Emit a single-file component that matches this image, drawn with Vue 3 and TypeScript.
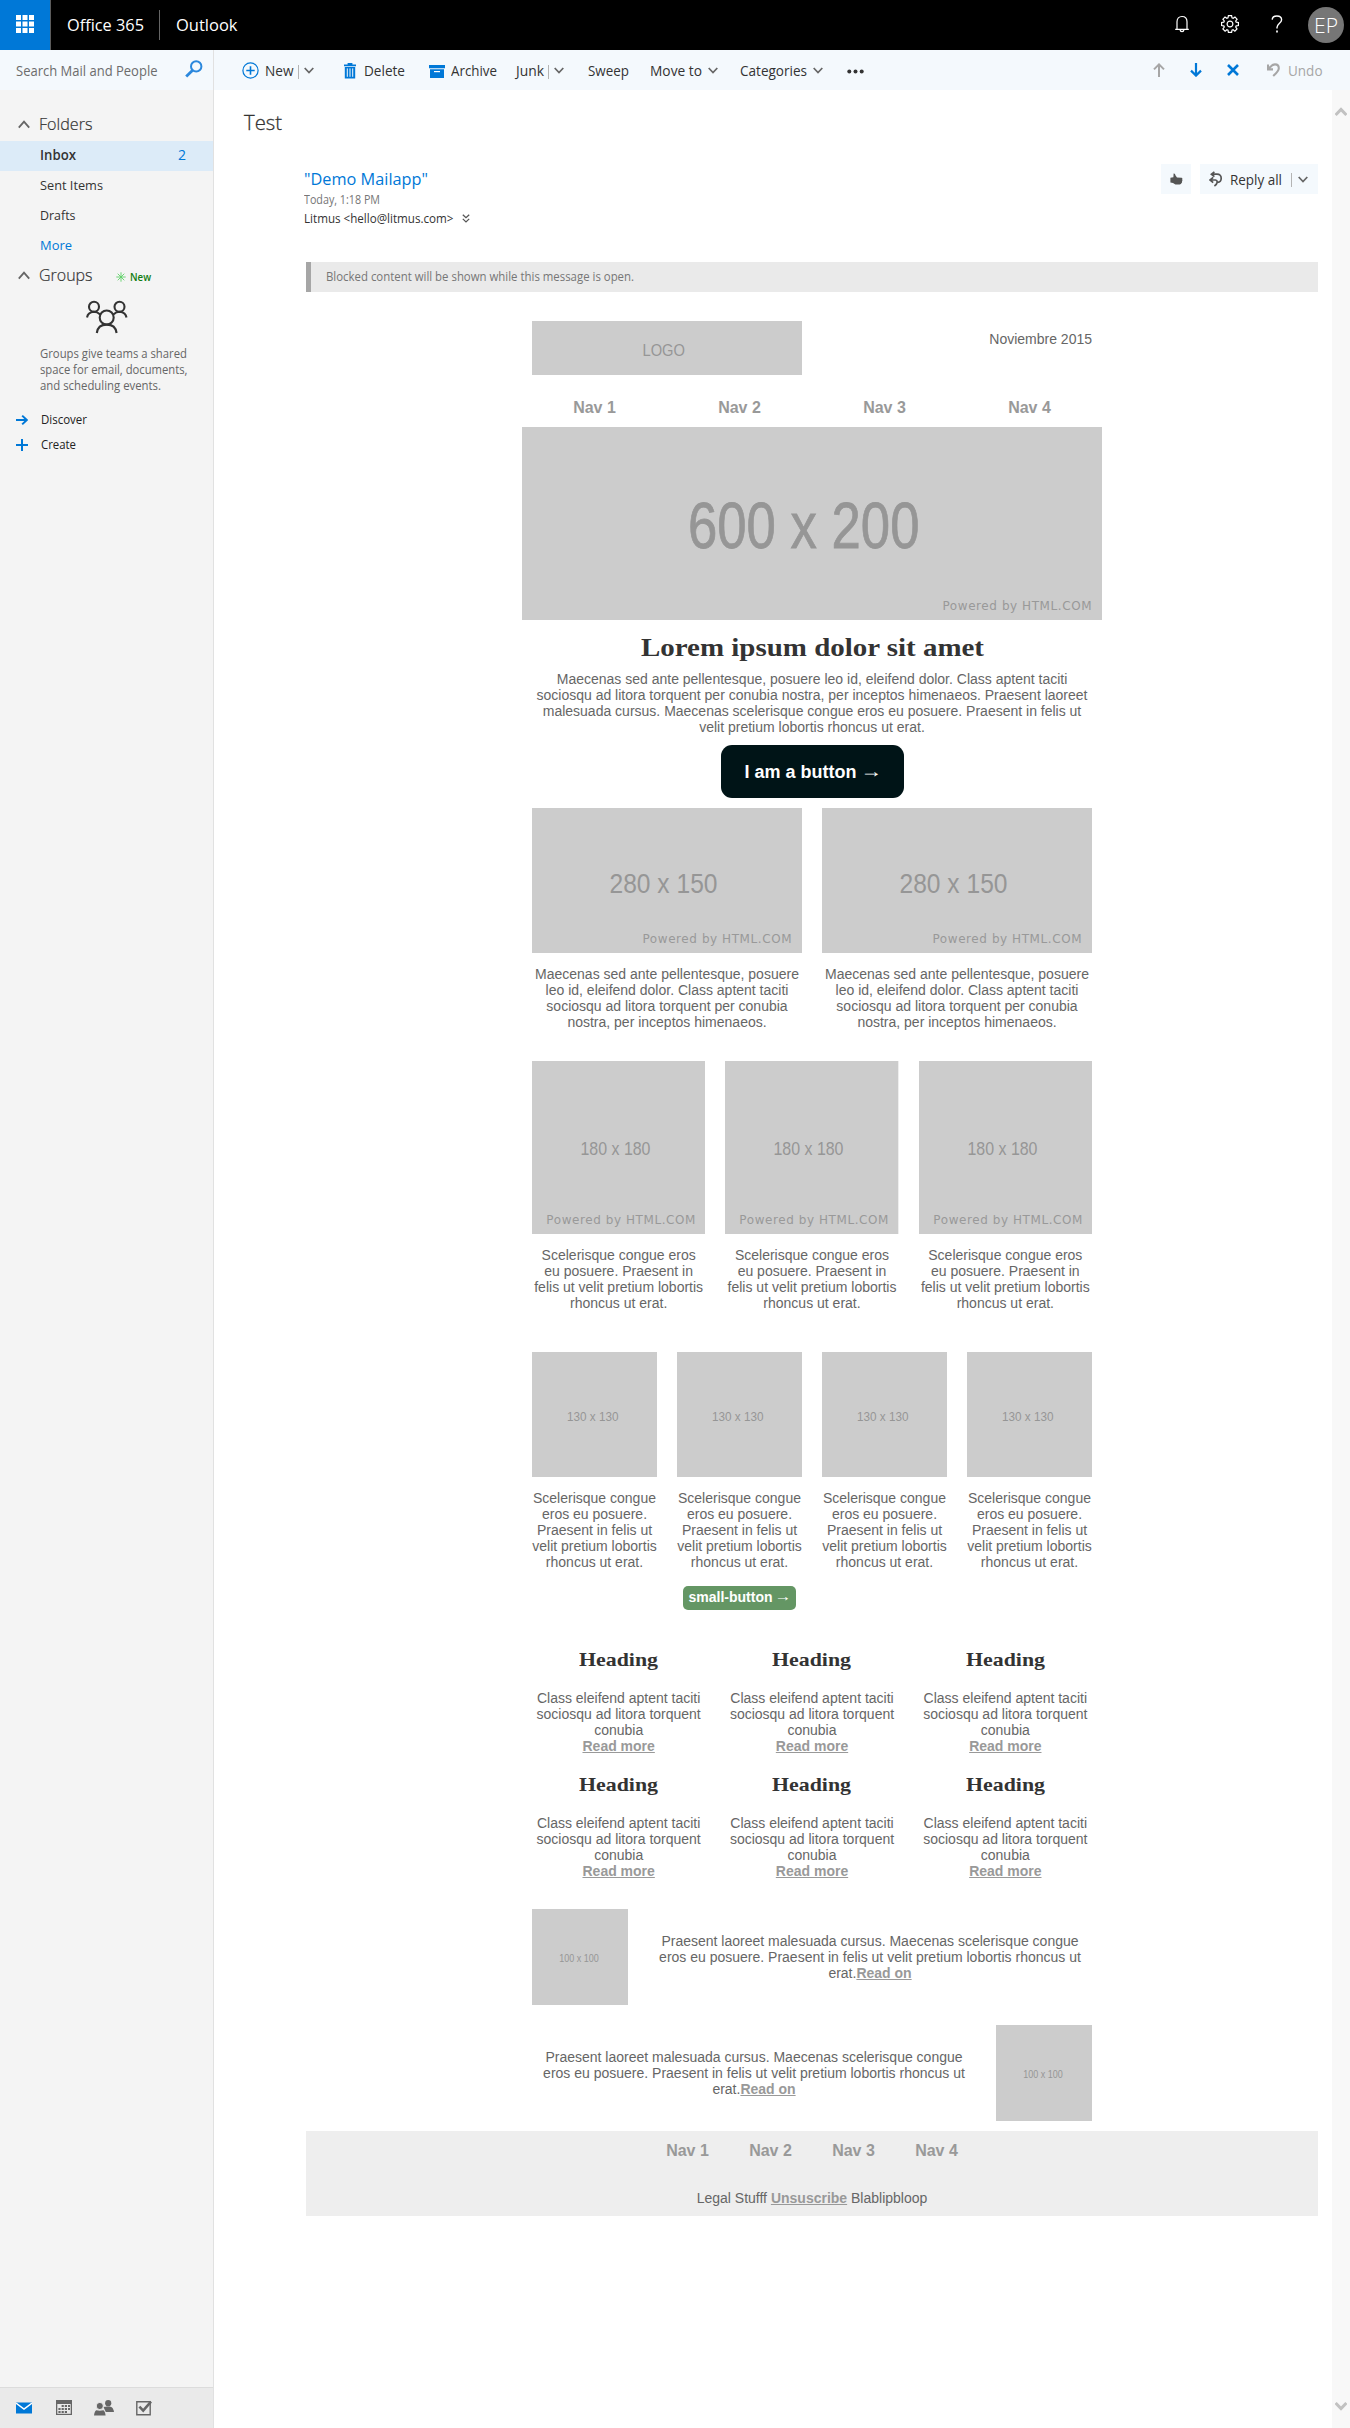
<script setup lang="ts">
import { h } from 'vue'
import type { Directive, FunctionalComponent } from 'vue'

// Squeezes or stretches a single-line label to a given width in pixels.
const vFit: Directive<HTMLElement, number> = {
  mounted(el, { value }) {
    const natural = el.getBoundingClientRect().width
    if (!natural) return
    el.style.transform = `scaleX(${value / natural})`
    el.style.marginRight = `${value - natural}px`
  },
}

interface PlaceholderProps {
  w: number
  h: number
  label: string
  x: number
  y: number
  len: number
  size: number
  credit?: number
}

// Grey dummy picture with its dimensions written on it.
const Placeholder: FunctionalComponent<PlaceholderProps> = (p) =>
  h('svg', { width: p.w, height: p.h, viewBox: `0 0 ${p.w} ${p.h}`, style: 'display:block' }, [
    h('rect', { width: p.w, height: p.h, fill: '#cccccc' }),
    h(
      'text',
      {
        x: p.x,
        y: p.y,
        textLength: p.len,
        lengthAdjust: 'spacingAndGlyphs',
        'font-size': p.size,
        'font-family': '"Liberation Sans", Arial, sans-serif',
        fill: '#969696',
        stroke: '#969696',
        'stroke-width': p.size > 40 ? 0.8 : 0,
      },
      p.label,
    ),
    p.credit
      ? h(
          'text',
          {
            x: p.w - 159.5 + (p.w < 200 ? 0.5 : 0),
            y: p.credit,
            textLength: 149,
            lengthAdjust: 'spacing',
            'font-size': 12,
            'font-family': '"DejaVu Sans", sans-serif',
            fill: '#999999',
          },
          'Powered by HTML.COM',
        )
      : null,
  ])
Placeholder.props = ['w', 'h', 'label', 'x', 'y', 'len', 'size', 'credit']

const folders = [
  { name: 'Inbox', width: 36, count: 2, active: true },
  { name: 'Sent Items', width: 63 },
  { name: 'Drafts', width: 35.5 },
  { name: 'More', width: 32, link: true },
]

const nav = ['Nav 1', 'Nav 2', 'Nav 3', 'Nav 4']

const intro = [
  'Maecenas sed ante pellentesque, posuere leo id, eleifend dolor. Class aptent taciti',
  'sociosqu ad litora torquent per conubia nostra, per inceptos himenaeos. Praesent laoreet',
  'malesuada cursus. Maecenas scelerisque congue eros eu posuere. Praesent in felis ut',
  'velit pretium lobortis rhoncus ut erat.',
]
const half = [
  'Maecenas sed ante pellentesque, posuere',
  'leo id, eleifend dolor. Class aptent taciti',
  'sociosqu ad litora torquent per conubia',
  'nostra, per inceptos himenaeos.',
]
const third = ['Scelerisque congue eros', 'eu posuere. Praesent in', 'felis ut velit pretium lobortis', 'rhoncus ut erat.']
const quarter = ['Scelerisque congue', 'eros eu posuere.', 'Praesent in felis ut', 'velit pretium lobortis', 'rhoncus ut erat.']
const teaser = ['Class eleifend aptent taciti', 'sociosqu ad litora torquent', 'conubia']
const article = ['Praesent laoreet malesuada cursus. Maecenas scelerisque congue', 'eros eu posuere. Praesent in felis ut velit pretium lobortis rhoncus ut']
</script>

<template>
  <div class="app">
    <header class="top">
      <div class="waffle">
        <svg width="18" height="18" viewBox="0 0 18 18" fill="#fff">
          <template v-for="r in 3" :key="r">
            <rect v-for="c in 3" :key="c" :x="(c - 1) * 6.5" :y="(r - 1) * 6.5" width="5" height="5" />
          </template>
        </svg>
      </div>
      <span v-fit="77" class="brand">Office 365</span>
      <i class="brand-sep"></i>
      <span v-fit="61.5" class="brand">Outlook</span>
      <div class="top-right">
        <svg class="bell" width="16" height="18" viewBox="0 0 16 18" fill="none" stroke="#fff" stroke-width="1.2">
          <path d="M1.2 14.4H14.8M3 14V6.8C3 3.6 5 1.5 8 1.5S13 3.6 13 6.8V14M6 14.6C6.2 16 7 16.6 8 16.6S9.8 16 10 14.6" />
        </svg>
        <svg class="gear" width="20" height="20" viewBox="-10 -10 20 20" fill="none" stroke="#fff" stroke-width="1.2">
          <path d="M-1.6-8.4H1.6L2-6.2 3.2-5.7 5-7 7.1-4.8 5.7-3 6.2-1.9 8.4-1.5V1.5L6.2 1.9 5.7 3 7 5 4.9 7.1 3.1 5.7 2 6.2 1.6 8.4H-1.6L-2 6.2-3.1 5.7-4.9 7.1-7.1 5-5.7 3-6.2 1.9-8.4 1.5V-1.5L-6.2-1.9-5.7-3-7.1-4.8-5-7-3.2-5.7-2-6.2Z" />
          <circle r="2.9" />
        </svg>
        <svg class="help" width="12" height="18" viewBox="0 0 12 18" fill="none" stroke="#fff" stroke-width="1.4">
          <path d="M1.2 4.6C1.3 2.2 3 1 5.9 1S10.6 2.4 10.6 4.8C10.6 8.2 6 8.4 6 12.6V13.4" />
          <path d="M6 15.6V17.4" stroke-width="1.7" />
        </svg>
        <div class="avatar"><span v-fit="24">EP</span></div>
      </div>
    </header>

    <div class="body">
      <aside class="side">
        <div class="search">
          <span v-fit="141.5">Search Mail and People</span>
          <svg width="18" height="18" viewBox="0 0 18 18" fill="none" stroke="#2b88dd">
            <circle cx="11.2" cy="6.4" r="5.2" stroke-width="2" />
            <path d="M7.4 10.4L1.2 16.6" stroke-width="2.8" />
          </svg>
        </div>
        <div class="group-head folders-head">
          <svg width="12" height="9" viewBox="0 0 12 9" fill="none" stroke="#666" stroke-width="1.8"><path d="M.8 7.6L6 1.6 11.2 7.6" /></svg>
          <span v-fit="53.5">Folders</span>
        </div>
        <div v-for="f in folders" :key="f.name" class="folder" :class="{ active: f.active, link: f.link }">
          <span v-fit="f.width">{{ f.name }}</span>
          <b v-if="f.count">{{ f.count }}</b>
        </div>
        <div class="group-head groups-head">
          <svg width="12" height="9" viewBox="0 0 12 9" fill="none" stroke="#666" stroke-width="1.8"><path d="M.8 7.6L6 1.6 11.2 7.6" /></svg>
          <span v-fit="53.5">Groups</span>
          <svg class="star" width="10" height="10" viewBox="-5 -5 10 10" stroke="#5fd068" stroke-width="0.9"><path d="M0-4.7V4.7M-4.7 0H4.7M-3.3-3.3L3.3 3.3M3.3-3.3L-3.3 3.3" /></svg>
          <em v-fit="21">New</em>
        </div>
        <svg class="people" width="42" height="34" viewBox="0 0 42 34" fill="none" stroke="#333" stroke-width="2.1">
          <circle cx="8" cy="6.8" r="5" />
          <circle cx="33.5" cy="6.8" r="5" />
          <circle cx="20.7" cy="17.5" r="7" />
          <path d="M1 17.5C1.6 14 3.6 12.2 7.6 11.8 10.6 11.8 12.6 13 14.2 14.6M40.5 17.5C39.9 14 37.9 12.2 33.9 11.8 30.9 11.8 28.9 13 27.3 14.6M10.8 33C11.4 28 14.8 24.6 20.7 24.6S30 28 30.6 33" />
        </svg>
        <div class="blurb">
          <span v-fit="147">Groups give teams a shared</span><br />
          <span v-fit="147.5">space for email, documents,</span><br />
          <span v-fit="121">and scheduling events.</span>
        </div>
        <div class="action">
          <svg width="12" height="12" viewBox="0 0 12 12" fill="none" stroke="#0078d7" stroke-width="2"><path d="M0 6H10.4M6.2 1.6L10.8 6 6.2 10.4" /></svg>
          <span v-fit="46">Discover</span>
        </div>
        <div class="action">
          <svg width="12" height="12" viewBox="0 0 12 12" stroke="#0078d7" stroke-width="2"><path d="M0 6H12M6 0V12" /></svg>
          <span v-fit="35">Create</span>
        </div>
        <div class="modules">
          <svg width="16" height="16" viewBox="0 0 16 16"><path d="M0 2.5H16V13.5H0Z" fill="#0078d7" /><path d="M0 3L8 9 16 3" fill="none" stroke="#fff" stroke-width="1.4" /></svg>
          <svg class="m-cal" width="16" height="16" viewBox="0 0 16 16"><path d="M0 0H16V15H0Z" fill="#666" /><path d="M1.3 4H14.7V13.8H1.3Z" fill="#eaeaea" /><path d="M5.6 5.9H14M2.4 8.9H14M2.4 11.9H11" stroke="#666" stroke-width="2" stroke-dasharray="2.2 1" /></svg>
          <svg class="m-people" width="20" height="16" viewBox="0 0 20 16" fill="#666"><circle cx="14.2" cy="3.2" r="3.1" /><path d="M9.6 7.2C12 6.4 16.8 6.2 18 7.6 19 8.6 19.8 10.2 20 12H11.8Z" /><circle cx="5.8" cy="6" r="3.6" stroke="#eaeaea" stroke-width="1" /><path d="M0 15.5C.3 12.8 1 11.2 2.2 10.2L5.8 10.8 9.4 10.2C10.6 11.2 11.4 12.8 11.6 15.5Z" /></svg>
          <svg class="m-task" width="16" height="16" viewBox="0 0 16 16" fill="none" stroke="#666"><path d="M.8 1.8H14.2V14.8H.8Z" stroke-width="1.4" /><path d="M3.4 6.6L7.2 10.6 15 1.6" stroke-width="2.6" /></svg>
        </div>
      </aside>

      <div class="main">
        <div class="toolbar">
          <svg class="t-new" width="17" height="17" viewBox="0 0 17 17" fill="none" stroke="#0078d7"><circle cx="8.5" cy="8.5" r="7.6" stroke-width="1.2" /><path d="M8.5 4.3V12.7M4.3 8.5H12.7" stroke-width="1.6" /></svg>
          <span v-fit="28.5">New</span>
          <i class="pipe"></i>
          <svg class="chev" viewBox="0 0 10 7"><path d="M.7 1L5 5.6 9.3 1" /></svg>
          <svg class="t-del" width="12" height="16" viewBox="0 0 12 16"><path d="M0 1.4H3.6V0H8.4V1.4H12V3.2H0ZM.8 4H11.2V15.4H.8Z" fill="#0078d7" /><path d="M3.3 5.4V13.8M6 5.4V13.8M8.7 5.4V13.8" stroke="#f4f9fd" stroke-width="1" /></svg>
          <span v-fit="41">Delete</span>
          <svg class="t-arc" width="16" height="13" viewBox="0 0 16 13"><path d="M0 0H16V3.2H0ZM1 4.2H15V13H1Z" fill="#0078d7" /><path d="M5 6.6H11" stroke="#fff" stroke-width="1.2" /></svg>
          <span v-fit="46">Archive</span>
          <span v-fit="28" class="t-junk">Junk</span>
          <i class="pipe"></i>
          <svg class="chev" viewBox="0 0 10 7"><path d="M.7 1L5 5.6 9.3 1" /></svg>
          <span v-fit="41" class="t-sweep">Sweep</span>
          <span v-fit="52" class="t-move">Move to</span>
          <svg class="chev wide" viewBox="0 0 10 7"><path d="M.7 1L5 5.6 9.3 1" /></svg>
          <span v-fit="67" class="t-cat">Categories</span>
          <svg class="chev wide" viewBox="0 0 10 7"><path d="M.7 1L5 5.6 9.3 1" /></svg>
          <svg class="t-more" width="17" height="5" viewBox="0 0 17 5" fill="#333"><circle cx="2.3" cy="2.5" r="2" /><circle cx="8.5" cy="2.5" r="2" /><circle cx="14.7" cy="2.5" r="2" /></svg>
          <div class="t-right">
            <svg width="12" height="14" viewBox="0 0 12 14" fill="none" stroke="#a6a6a6" stroke-width="2"><path d="M6 14V1.6M1 6.4L6 1.4 11 6.4" /></svg>
            <svg class="t-down" width="12" height="14" viewBox="0 0 12 14" fill="none" stroke="#0078d7" stroke-width="2.2"><path d="M6 0V12.4M1 7.6L6 12.6 11 7.6" /></svg>
            <svg class="t-x" width="12" height="12" viewBox="0 0 12 12" stroke="#0078d7" stroke-width="2.6"><path d="M1 1L11 11M11 1L1 11" /></svg>
            <svg class="t-undo" width="13" height="14" viewBox="0 0 13 14" fill="none" stroke="#a6a6a6" stroke-width="2.1"><path d="M1 1.4V6.4H6M1.4 6C3.6 3.2 5.4 1.4 8 1.4 10.6 1.4 11.8 3 11.8 5.2 11.8 8 9 10.4 6.2 13" /></svg>
            <span v-fit="34.5">Undo</span>
          </div>
        </div>

        <div class="pane">
          <div class="reader">
            <div class="subject"><span v-fit="38">Test</span></div>
            <div class="head">
              <div class="who">
                <div class="from"><span v-fit="124">"Demo Mailapp"</span></div>
                <div class="when"><span v-fit="76">Today, 1:18 PM</span></div>
                <div class="to">
                  <span v-fit="149.5">Litmus &lt;hello@litmus.com&gt;</span>
                  <svg width="8" height="9" viewBox="0 0 8 9" fill="none" stroke="#555" stroke-width="1.3"><path d="M.8.7L4 3.7 7.2.7M.8 4.9L4 7.9 7.2 4.9" /></svg>
                </div>
              </div>
              <div class="like">
                <svg width="13" height="12" viewBox="0 0 13 12" fill="#555"><path d="M.4 4.8L3.4 4.2 3.6.6C4.6.2 5.2 1 5.4 2.2L7 4.4 11.6 4.8C12.4 5 12.6 6 12.2 6.6 12.6 7.4 12.4 8 12 8.6 12.2 9.4 11.8 10.2 11.2 10.4 10.8 11.2 10 11.4 9 11.4H5.4L3 10 .4 9.6Z" /></svg>
              </div>
              <div class="reply">
                <svg width="14" height="16" viewBox="0 0 14 16" fill="none" stroke="#555" stroke-width="1.7"><path d="M5.4.8L2.4 3.2 5.4 5.6M2.6 3.2H8C10.8 3.2 12.2 5 12.2 7.2 12.2 9.6 11 11.2 8.6 11.4M4.2 6.4L1 9 4.2 11.6M1.4 9H6.4C9 9.4 8.8 13 5.4 15" /></svg>
                <span v-fit="52">Reply all</span>
                <i class="pipe"></i>
                <svg class="chev" viewBox="0 0 10 7"><path d="M.7 1L5 5.6 9.3 1" /></svg>
              </div>
            </div>
            <div class="blocked"><span v-fit="308">Blocked content will be shown while this message is open.</span></div>

            <div class="mail">
              <div class="pad logo-row">
                <Placeholder :w="270" :h="54" label="LOGO" :x="110.5" :y="35" :len="42.5" :size="17" />
                <span>Noviembre 2015</span>
              </div>
              <div class="nav"><a v-for="n in nav" :key="n">{{ n }}</a></div>
              <Placeholder :w="580" :h="193" label="600 x 200" :x="166" :y="120.5" :len="231.5" :size="65" :credit="183" />
              <h1><span v-fit="343">Lorem ipsum dolor sit amet</span></h1>
              <p><template v-for="l in intro" :key="l">{{ l }}<br /></template></p>
              <div class="big-button">I am a button <span>→</span></div>

              <div class="pad cols two">
                <div v-for="n in 2" :key="n">
                  <Placeholder :w="270" :h="145" label="280 x 150" :x="77.5" :y="85" :len="108" :size="27" :credit="135" />
                  <p><template v-for="l in half" :key="l">{{ l }}<br /></template></p>
                </div>
              </div>
              <div class="pad cols three pics">
                <div v-for="n in 3" :key="n">
                  <Placeholder :w="173.33" :h="173" label="180 x 180" :x="48.5" :y="94" :len="70" :size="17.5" :credit="163.5" />
                  <p><template v-for="l in third" :key="l">{{ l }}<br /></template></p>
                </div>
              </div>
              <div class="pad cols four">
                <div v-for="n in 4" :key="n">
                  <Placeholder :w="125" :h="125" label="130 x 130" :x="35" :y="68.5" :len="51.5" :size="13" />
                  <p><template v-for="l in quarter" :key="l">{{ l }}<br /></template></p>
                  <div v-if="n === 2" class="small-button">small-button <span>→</span></div>
                </div>
              </div>
              <div v-for="row in 2" :key="row" class="pad cols three teasers">
                <div v-for="n in 3" :key="n">
                  <h2><span v-fit="79">Heading</span></h2>
                  <p><template v-for="l in teaser" :key="l">{{ l }}<br /></template><a>Read more</a></p>
                </div>
              </div>
              <div class="pad article">
                <Placeholder :w="96" :h="96" label="100 x 100" :x="27.2" :y="52.7" :len="39.5" :size="10" />
                <p>{{ article[0] }}<br />{{ article[1] }}<br />erat.<a>Read on</a></p>
              </div>
              <div class="pad article flip">
                <Placeholder :w="96" :h="96" label="100 x 100" :x="27.2" :y="52.7" :len="39.5" :size="10" />
                <p>{{ article[0] }}<br />{{ article[1] }}<br />erat.<a>Read on</a></p>
              </div>
            </div>
            <footer class="foot">
              <div class="foot-nav"><a v-for="n in nav" :key="n">{{ n }}</a></div>
              <div class="legal">Legal Stufff <a>Unsuscribe</a> Blablipbloop</div>
            </footer>
          </div>
          <div class="scroll">
            <svg width="12" height="10" viewBox="0 0 12 10" fill="none" stroke="#c1c1c1" stroke-width="3"><path d="M.6 8L6 2.4 11.4 8" /></svg>
            <svg width="12" height="10" viewBox="0 0 12 10" fill="none" stroke="#c1c1c1" stroke-width="3"><path d="M.6 2L6 7.6 11.4 2" /></svg>
          </div>
        </div>
      </div>
    </div>
  </div>
</template>

<style>
body {
  margin: 0;
  background: #fff;
}
</style>

<style scoped>
.app {
  width: 1350px;
  height: 2428px;
  display: flex;
  flex-direction: column;
  overflow: hidden;
  background: #fff;
  font-family: 'Open Sans', 'Noto Sans', sans-serif;
  font-size: 14px;
  color: #333;
}
svg { display: block; flex: none; }
span, em { white-space: nowrap; }
.app span, .group-head em { display: inline-block; transform-origin: 0 50%; flex: none; }

.top { height: 50px; flex: none; background: #000; color: #fff; display: flex; align-items: center; }
.waffle { width: 50px; height: 50px; background: #0078d7; border-right: 1px solid #5c5c5c; display: flex; align-items: center; box-sizing: content-box; }
.waffle svg { margin: -3px 0 0 16px; }
.brand { font-size: 16px; font-weight: 400; line-height: 24px; }
.waffle + .brand { margin-left: 15.5px; }
.brand-sep { width: 1px; height: 30px; background: #666; margin: 0 16px 0 15.5px; }
.top-right { margin-left: auto; display: flex; align-items: center; }
.top-right > svg { margin-top: -3px; }
.gear { margin-left: 30px; }
.help { margin-left: 31.5px; }
.avatar { width: 36px; height: 36px; border-radius: 50%; background: #767676; margin: 0 6px 0 25px; font-size: 20.5px; font-weight: 300; line-height: 36px; }
.avatar span { margin-left: 6px; }

.body { flex: 1; display: flex; min-height: 0; }
.side { width: 213px; flex: none; border-right: 1px solid #e1e1e1; background: #f4f4f4; display: flex; flex-direction: column; }
.search { height: 40px; background: #f4f9fd; display: flex; align-items: center; color: #6c6c6c; font-size: 14px; }
.search span { margin-left: 15.5px; }
.search svg { margin: -3px 10px 0 auto; }
.group-head { display: flex; align-items: center; font-size: 17px; font-weight: 300; line-height: 28px; }
.group-head > svg:first-child { margin: 2px 9.5px 0 17.5px; }
.group-head > span { -webkit-text-stroke: 0.2px #333; margin-left: -0.5px; }
.folders-head { height: 31px; margin: 18px 0 2px; }
.groups-head { height: 27px; }
.groups-head .star { margin: 5px 4.5px 0 23.5px; }
.groups-head em { font-style: normal; font-size: 10px; font-weight: 600; color: #107c10; padding-top: 5px; }
.folder { height: 30px; line-height: 28px; padding: 0 27px 0 39.5px; display: flex; font-size: 13.5px; justify-content: flex-start; }
.folder b { margin-left: auto; color: #0078d7; font-weight: 400; font-size: 14px; }
.folder.active { background: #dcebf8; }
.folder.active span { font-weight: 600; }
.folder.link { color: #0078d7; }
.people { margin: 12px 0 0 85.5px; }
.blurb { margin: 12px 0 13px 39.5px; font-size: 12px; line-height: 16px; color: #666; }
.action { height: 25px; display: flex; align-items: center; font-size: 12px; color: #222; }
.action svg { margin: 0 12.5px 0 16px; }
.modules { margin-top: auto; height: 40px; border-top: 1px solid #dcdcdc; background: #eaeaea; display: flex; align-items: center; padding-left: 16px; }
.m-cal { margin-left: 24px; }
.m-people { margin-left: 22px; }
.m-task { margin-left: 22px; }

.main { flex: 1; display: flex; flex-direction: column; }
.toolbar { height: 40px; background: #f4f9fd; display: flex; align-items: center; line-height: 22px; }
.toolbar > span, .t-right > span { padding-top: 1px; }
.pipe { width: 1px; height: 14px; background: #b4b4b4; margin: 4px 5px 0 4px; }
.chev { width: 10px; height: 7px; fill: none; stroke: #666; stroke-width: 1.7; }
.t-new { margin: 0 6.5px 0 27.5px; }
.t-del { margin: 1px 8px 0 30px; }
.t-arc { margin: 3px 6px 0 24px; }
.t-junk { margin-left: 19.5px; }
.t-sweep { margin-left: 23.5px; }
.t-move { margin-left: 21px; }
.chev.wide { margin-left: 6px; }
.t-cat { margin-left: 22.5px; }
.t-more { margin: 2px 0 0 24px; }
.t-right { margin-left: auto; display: flex; align-items: center; padding-right: 28px; color: #a6a6a6; }
.t-down { margin-left: 25px; }
.t-x { margin-left: 25px; }
.t-undo { margin: 0 8px 0 28px; }

.pane { flex: 1; display: flex; }
.reader { flex: 1; padding: 17px 14px 0 92px; }
.subject { height: 30px; line-height: 30px; font-size: 20.5px; font-weight: 300; margin-left: -62px; -webkit-text-stroke: 0.3px #333; }
.head { display: flex; margin-top: 27px; height: 98px; }
.who { padding-top: 4px; margin-left: -2px; flex: 1; }
.from { font-size: 16.5px; line-height: 22px; color: #0078d7; }
.when { font-size: 12px; line-height: 19px; color: #767676; }
.to { font-size: 12px; line-height: 19px; display: flex; align-items: center; }
.to svg { margin-left: 8.5px; }
.like { width: 30px; height: 30px; background: #f4f9fd; display: flex; align-items: center; justify-content: center; margin-right: 9px; }
.reply { width: 118px; height: 30px; box-sizing: border-box; background: #f4f9fd; display: flex; align-items: center; padding-left: 9px; }
.reply > span { margin-left: 7px; padding-top: 1px; }
.reply .pipe { margin: 2px 6px 0 9px; }
.blocked { height: 29px; line-height: 29px; padding-bottom: 1px; border-left: 5px solid #a6a6a6; background: #eaeaea; padding-left: 14.5px; font-size: 12px; color: #767676; }
.scroll { width: 18px; background: #f8f8f8; display: flex; flex-direction: column; justify-content: space-between; padding: 17px 0; box-sizing: border-box; }
.scroll svg { margin-left: 3px; }

.mail { width: 580px; margin: 29px auto 10px; font: 14px/16px 'Liberation Sans', Arial, sans-serif; color: #666; text-align: center; }
.mail p { margin: 0; white-space: nowrap; }
.mail a, .foot a { font-weight: 700; color: #999; }
.mail p a, .legal a { text-decoration: underline; }
.pad { padding: 0 10px; }
.logo-row { display: flex; justify-content: space-between; }
.logo-row > span { margin-top: 10px; }
.nav { display: grid; grid-template-columns: repeat(4, 1fr); padding-top: 13px; height: 39px; line-height: 39px; font-size: 16px; }
h1, h2 { margin: 0; font-family: 'Liberation Serif', 'Times New Roman', serif; font-weight: 700; color: #333; }
h1 { height: 47px; padding-top: 4px; font-size: 26px; line-height: 48px; }
h2 { font-size: 19px; line-height: 20px; margin-bottom: 20px; }
.big-button { width: 183px; height: 53px; margin: 10px auto; border-radius: 11px; background: #001417; color: #fff; font-size: 18px; font-weight: 700; line-height: 54px; white-space: nowrap; }
.big-button span, .small-button span { font-weight: 400; line-height: 1; transform: translateY(-1px) scaleX(1.2); transform-origin: 50% 50%; }
.cols { display: grid; column-gap: 20px; }
.two { grid-template-columns: repeat(2, 1fr); }
.three { grid-template-columns: repeat(3, 1fr); }
.four { grid-template-columns: repeat(4, 1fr); margin-top: 41px; height: 258px; }
.cols svg + p { margin-top: 13px; }
.pics { margin-top: 31px; }
.small-button { width: 113px; height: 24px; margin: 16px auto 0; border-radius: 5px; background: #649664; color: #fff; font-weight: 700; line-height: 23px; white-space: nowrap; }
.teasers { margin-top: 40px; }
.teasers + .teasers { margin-top: 21px; }
.article { display: flex; align-items: center; justify-content: space-between; margin-top: 30px; }
.article p { width: 444px; }
.article + .article { margin-top: 20px; }
.flip { flex-direction: row-reverse; }
.foot { height: 85px; background: #eee; font: 14px/16px 'Liberation Sans', Arial, sans-serif; color: #666; text-align: center; }
.foot-nav { width: 332px; margin: 0 auto; display: grid; grid-template-columns: repeat(4, 1fr); font-size: 16px; line-height: 39px; height: 59px; }
</style>
